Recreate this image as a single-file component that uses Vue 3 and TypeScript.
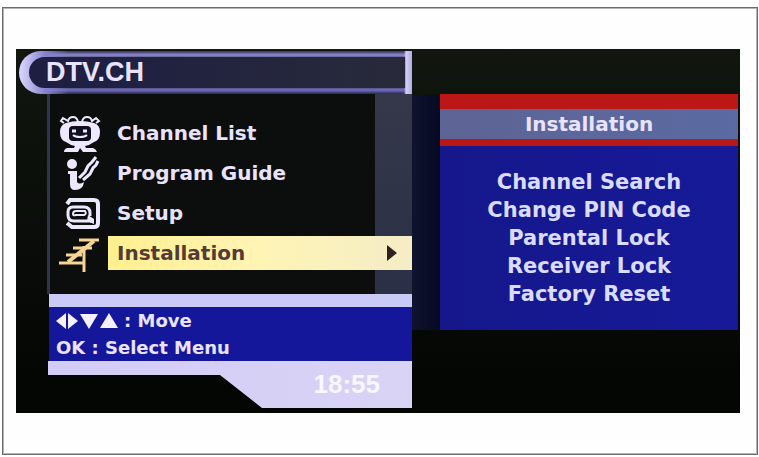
<script setup lang="ts">
import { ref } from 'vue'

type IconName = 'tv' | 'guide' | 'setup' | 'antenna'

interface MenuEntry {
  label: string
  icon: IconName
}

const entries: MenuEntry[] = [
  { label: 'Channel List', icon: 'tv' },
  { label: 'Program Guide', icon: 'guide' },
  { label: 'Setup', icon: 'setup' },
  { label: 'Installation', icon: 'antenna' },
]

const submenu: string[] = [
  'Channel Search',
  'Change PIN Code',
  'Parental Lock',
  'Receiver Lock',
  'Factory Reset',
]

const selected = ref('Installation')
</script>

<template>
  <main class="frame">
    <div class="screen">
      <section class="left">
        <header class="title-bar">
          <h1 class="title">DTV.CH</h1>
        </header>

        <div class="panel">
          <nav class="menu" aria-label="Main menu">
            <button
              v-for="entry in entries"
              :key="entry.label"
              type="button"
              class="entry"
              :class="{ active: entry.label === selected }"
              @click="selected = entry.label"
            >
              <svg v-if="entry.icon === 'tv'" class="icon" viewBox="0 0 44 38" aria-hidden="true">
                <path class="fill" d="M8 9Q2 11 2 18Q2 26 8 28Q12 31 17 32L16 34H9Q6 35 6 38H20L22 34L25 38H39Q38 35 35 34H28L27 32Q32 31 36 28Q42 26 42 18Q42 11 36 9Q29 7 22 7Q14 7 8 9Z" />
                <path class="thin" d="M6 9L3 7L5 4L10 7Q11 3 15 3Q19 3 20 8M24 8Q25 3 29 3Q33 3 34 7L38 4L41 7L38 9" />
                <rect class="hole" x="11" y="12" width="22" height="15" rx="4" />
                <path class="line" d="M14 17H18M25 17H29" />
                <path class="thin" d="M15 21Q17 23 22 23Q27 23 29 21" />
              </svg>
              <svg v-else-if="entry.icon === 'guide'" class="icon" viewBox="0 0 44 38" aria-hidden="true">
                <circle class="fill" cx="14" cy="10" r="5" />
                <path class="fill" d="M10 17H19V28Q21 31 26 28Q25 36 17 36Q12 36 12 30V20H10Z" />
                <path class="line" d="M21 24L27 18L30 12L34 8L38 3M25 26L32 20L35 14L38 11L40 7" />
              </svg>
              <svg v-else-if="entry.icon === 'setup'" class="icon" viewBox="0 0 44 38" aria-hidden="true">
                <path class="thick" d="M9 10L12 6H36Q40 6 40 10V29Q40 33 36 33H14L9 29" />
                <path class="line" d="M32 22V19Q32 13 26 13H15Q10 13 10 18V21Q10 27 16 27H34" />
                <path class="thin" d="M15 20Q15 17 18 17H27Q29 20 26 21H18Q15 22 15 20" />
                <path class="fill" d="M30 21L36 25V30L29 27Z" />
              </svg>
              <svg v-else class="icon antenna" viewBox="0 0 44 38" aria-hidden="true">
                <path class="line" d="M21 6H41M15 14H34M8 21H24M1 29H25M26 12V38" />
                <path class="thick" d="M10 28L36 7" />
              </svg>
              <span class="label">{{ entry.label }}</span>
            </button>
          </nav>
        </div>

        <div class="help">
          <p class="help-line">
            <svg class="arrows" viewBox="0 0 62 18" aria-hidden="true">
              <path d="M0 9L10 1V17ZM12 1L22 9L12 17ZM24 2H42L33 17ZM44 16L53 1L62 16Z" />
            </svg>
            <span>: Move</span>
          </p>
          <p class="help-line">OK : Select Menu</p>
        </div>
        <footer class="clock"><time>18:55</time></footer>
      </section>

      <div class="gap"></div>

      <section class="right">
        <h2 class="sub-title">Installation</h2>
        <ul class="sub-list">
          <li v-for="item in submenu" :key="item">
            <button type="button" class="sub-item">{{ item }}</button>
          </li>
        </ul>
      </section>
    </div>
  </main>
</template>

<style>
body {
  background: #fff;
}
</style>

<style scoped>
.frame {
  margin: 7px 1px 2px 2px;
  padding: 40px 16px 40px 12px;
  border: 1px solid #6c6c6c;
  outline: 1px solid #b4b4b4;
  outline-offset: -2px;
  background: #fefefe;
  font-family: "DejaVu Sans", Verdana, sans-serif;
  font-weight: 700;
}
.screen {
  display: grid;
  grid-template-columns: 396fr 28fr 298fr;
  margin: 1px;
  padding: 2px 2px 5px 0;
  background: linear-gradient(#11160f, #040604 90%);
  color: #e9e3ff;
}
.left {
  display: flex;
  flex-direction: column;
}
.title-bar {
  margin-left: 3px;
  padding: 6px 7px 6px 10px;
  border-radius: 23px 0 0 23px;
  background: linear-gradient(90deg, #dcd8ff 0, #8884cc 26px, transparent 50px, transparent calc(100% - 8px), #d4d0fa calc(100% - 6px), #b0addf 100%),
    linear-gradient(#31305a, #918cd0 4px, #34345c 8px, #22244a 34px, #7470bd 39px, #292950);
}
.title {
  margin: 0;
  padding-left: 17px;
  border-radius: 18px 0 0 18px;
  background: linear-gradient(90deg, #1d1e43, #282a3a);
  font: 700 27px/31px "Liberation Sans", Arial, sans-serif;
}
.panel {
  margin-left: 31px;
  padding: 20px 0 22px;
  border-left: 3px solid #30334f;
  background: linear-gradient(#343849, #2c3046) right / 37px 100% no-repeat #0b0e0c;
}
.menu {
  display: flex;
  flex-direction: column;
  gap: 2px;
}
.entry {
  display: flex;
  align-items: center;
  gap: 6px;
  padding: 0 0 0 8px;
  border: 0;
  background: none;
  color: inherit;
  font: 700 20px/34px "DejaVu Sans", Verdana, sans-serif;
  text-align: left;
}
.icon {
  flex: none;
  width: 44px;
  height: 38px;
}
.fill {
  fill: #eee8ff;
}
.hole {
  fill: #100f20;
}
.line,
.thick,
.thin {
  fill: none;
  stroke: #eee8ff;
  stroke-width: 3;
}
.thick {
  stroke-width: 4;
}
.thin {
  stroke-width: 2;
}
.antenna .line,
.antenna .thick {
  stroke: #f7d492;
}
.label {
  flex: 1;
  padding-left: 9px;
}
.active .label {
  display: flex;
  align-items: center;
  justify-content: space-between;
  padding-right: 15px;
  background: linear-gradient(90deg, #fff08f, #fff4b5 50%, #f4edc6);
  color: #553a38;
}
.active .label::after {
  content: "";
  border: 8px solid transparent;
  border-right: 0;
  border-left: 10px solid #302024;
}
.help {
  margin-left: 33px;
  padding-left: 7px;
  border: solid #cbc9f5;
  border-width: 13px 0 0;
  background: #15179a;
  font-size: 18px;
}
.help-line {
  display: flex;
  align-items: center;
  gap: 6px;
  margin: 0;
  line-height: 27px;
}
.arrows {
  width: 62px;
  height: 18px;
  fill: #f4f0ff;
}
.clock {
  margin-left: 32px;
  padding: 0 32px 0 0;
  background: linear-gradient(90deg, #d3ccf7, #d9d3f5);
  clip-path: polygon(0 0, 100% 0, 100% 100%, 214px 100%, 172px 14px, 0 14px);
  color: #f8f6ff;
  font: 700 26px/47px "Liberation Sans", Arial, sans-serif;
  text-align: right;
}
.gap {
  margin: 44px 0 78px;
  background: linear-gradient(90deg, #10132e, #060922);
}
.right {
  display: flex;
  flex-direction: column;
  margin: 43px 0 78px;
  background: linear-gradient(90deg, #15178b, #171a98);
  text-align: center;
}
.sub-title {
  margin: 0;
  border: solid #bb1716;
  border-width: 15px 0 7px;
  background: linear-gradient(90deg, #5e6494, #5a6aa2);
  font-size: 20px;
  line-height: 30px;
}
.sub-list {
  margin: 0;
  padding: 22px 0;
  list-style: none;
}
.sub-item {
  display: block;
  width: 100%;
  padding: 0;
  border: 0;
  background: none;
  color: #d9dcff;
  font: 700 21px/28px "DejaVu Sans", Verdana, sans-serif;
}
</style>
